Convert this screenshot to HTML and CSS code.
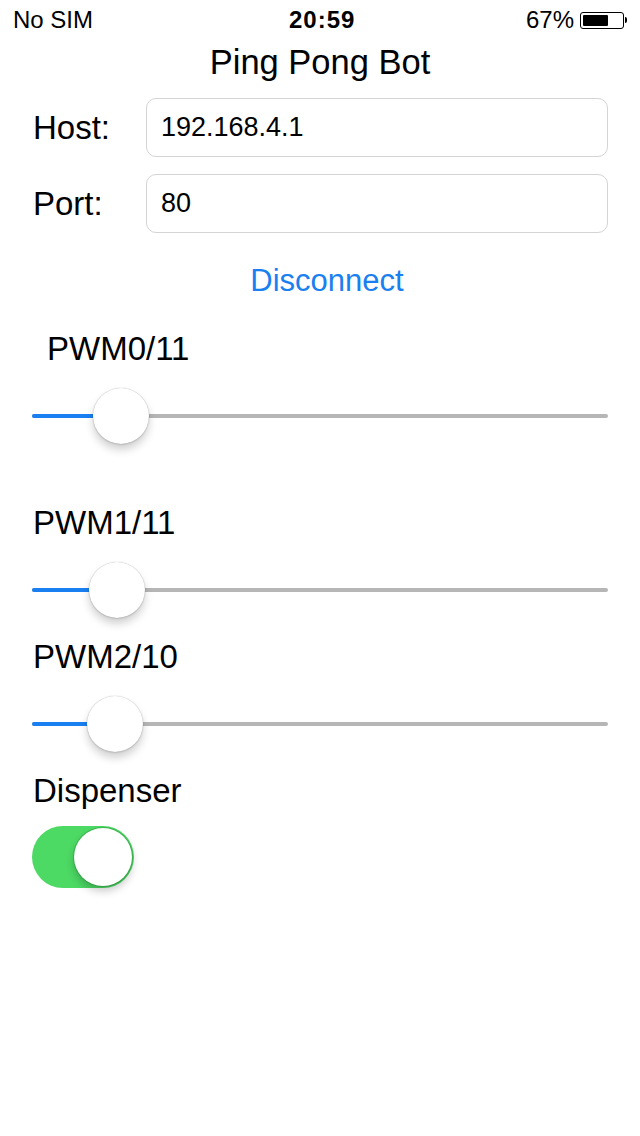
FILE: index.html
```html
<!DOCTYPE html>
<html>
<head>
<meta charset="utf-8">
<link rel="stylesheet" href="styles.css">
</head>
<body>
<div class="screen">
  <div class="status">
    <span class="carrier">No SIM</span>
    <span class="time">20:59</span>
    <span class="batt-wrap">67%<span class="battery"><span class="battery-fill"></span></span><span class="battery-tip"></span></span>
  </div>
  <div class="title">Ping Pong Bot</div>
  <div class="form">
    <div class="row">
      <span class="label">Host:</span>
      <div class="field">192.168.4.1</div>
    </div>
    <div class="row row-port">
      <span class="label">Port:</span>
      <div class="field">80</div>
    </div>
  </div>
  <div class="disconnect">Disconnect</div>

  <div class="control-label label-indent first">PWM0/11</div>
  <div class="slider"><div class="track"><div class="fill" style="width: 89px"><span class="thumb"></span></div></div></div>

  <div class="control-label gap-large">PWM1/11</div>
  <div class="slider"><div class="track"><div class="fill" style="width: 85px"><span class="thumb"></span></div></div></div>

  <div class="control-label">PWM2/10</div>
  <div class="slider"><div class="track"><div class="fill" style="width: 83px"><span class="thumb"></span></div></div></div>

  <div class="control-label">Dispenser</div>
  <div class="toggle"><span class="knob"></span></div>
</div>
</body>
</html>
```
FILE: styles.css
```css
html, body {
  margin: 0;
  padding: 0;
  background: #ffffff;
}
body {
  font-family: "Liberation Sans", Arial, sans-serif;
  color: #000;
}
.screen {
  width: 640px;
  height: 1136px;
  overflow: hidden;
}
.status {
  height: 40px;
  display: flex;
  align-items: center;
  justify-content: space-between;
  padding: 0 13px 0 13px;
  font-size: 24px;
  position: relative;
}
.time {
  font-weight: bold;
  font-size: 24px;
  letter-spacing: 1px;
  position: absolute;
  left: 289px;
  top: 0;
  line-height: 40px;
}
.batt-wrap {
  display: flex;
  align-items: center;
}
.battery {
  width: 44px;
  height: 17px;
  box-sizing: border-box;
  border: 1.5px solid #000;
  border-radius: 3px;
  margin-left: 6px;
  padding: 2px;
  display: flex;
}
.battery-fill {
  width: 67%;
  background: #000;
  border-radius: 1px;
}
.battery-tip {
  width: 2px;
  height: 6px;
  background: #000;
  border-radius: 0 2px 2px 0;
  margin-left: 1px;
}
.title {
  height: 45px;
  line-height: 45px;
  text-align: center;
  font-size: 34.5px;
}
.form {
  padding: 13px 32px 0 33px;
}
.row {
  display: flex;
  align-items: center;
}
.row-port {
  margin-top: 17px;
}
.label {
  width: 113px;
  font-size: 33px;
}
.field {
  flex: 1;
  height: 59px;
  box-sizing: border-box;
  border: 1.5px solid #d4d4d4;
  border-radius: 10px;
  padding-left: 14px;
  display: flex;
  align-items: center;
  font-size: 27px;
}
.disconnect {
  margin-top: 26px;
  height: 44px;
  line-height: 44px;
  text-align: center;
  font-size: 31px;
  color: #1a7ff0;
  padding-left: 14px;
}
.control-label {
  height: 40px;
  line-height: 40px;
  font-size: 33px;
  padding-left: 33px;
  margin-top: 17px;
}
.control-label.first {
  margin-top: 26px;
}
.label-indent {
  padding-left: 47px;
}
.control-label.gap-large {
  margin-top: 57px;
}
.slider {
  height: 60px;
  margin-top: 17px;
  padding: 0 32px;
  display: flex;
  align-items: center;
}
.track {
  flex: 1;
  height: 4px;
  background: #b6b6b6;
  border-radius: 2px;
  position: relative;
}
.fill {
  height: 4px;
  background: #1a7ff0;
  border-radius: 2px 0 0 2px;
  position: relative;
}
.thumb {
  position: absolute;
  right: -28px;
  top: -26px;
  width: 56px;
  height: 56px;
  border-radius: 50%;
  background: #fff;
  box-shadow: 0 0 1px rgba(0,0,0,0.35), 0 6px 8px rgba(0,0,0,0.18), 0 1px 2px rgba(0,0,0,0.1);
}
.toggle {
  margin: 15px 0 0 32px;
  width: 102px;
  height: 62px;
  border-radius: 31px;
  background: #4cd964;
  display: flex;
  align-items: center;
  justify-content: flex-end;
  padding-right: 2px;
  box-sizing: border-box;
}
.knob {
  width: 58px;
  height: 58px;
  border-radius: 50%;
  background: #fff;
  box-shadow: 0 0 0 1px rgba(40,120,50,0.35), 0 5px 8px rgba(0,0,0,0.22);
}
```
